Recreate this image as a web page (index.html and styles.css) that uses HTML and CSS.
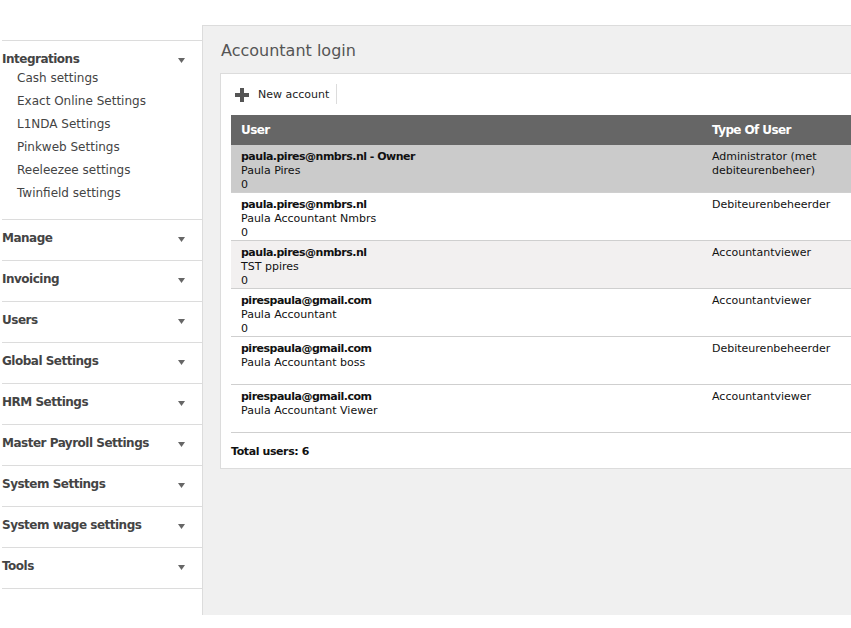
FILE: index.html
```html
<!DOCTYPE html>
<html>
<head>
<meta charset="utf-8">
<link rel="stylesheet" href="styles.css">
</head>
<body>
<div class="topbar"></div>
<div class="layout">
  <nav class="sidebar">
    <ul class="nav">
      <li class="section">
        <div class="section-head"><span>Integrations</span><svg class="caret" width="7" height="5" viewBox="0 0 7 5"><polygon points="0,0 7,0 3.5,5" fill="#666"/></svg></div>
        <ul class="sub">
          <li>Cash settings</li>
          <li>Exact Online Settings</li>
          <li>L1NDA Settings</li>
          <li>Pinkweb Settings</li>
          <li>Reeleezee settings</li>
          <li>Twinfield settings</li>
        </ul>
      </li>
      <li class="section"><div class="section-head"><span>Manage</span><svg class="caret" width="7" height="5" viewBox="0 0 7 5"><polygon points="0,0 7,0 3.5,5" fill="#666"/></svg></div></li>
      <li class="section"><div class="section-head"><span>Invoicing</span><svg class="caret" width="7" height="5" viewBox="0 0 7 5"><polygon points="0,0 7,0 3.5,5" fill="#666"/></svg></div></li>
      <li class="section"><div class="section-head"><span>Users</span><svg class="caret" width="7" height="5" viewBox="0 0 7 5"><polygon points="0,0 7,0 3.5,5" fill="#666"/></svg></div></li>
      <li class="section"><div class="section-head"><span>Global Settings</span><svg class="caret" width="7" height="5" viewBox="0 0 7 5"><polygon points="0,0 7,0 3.5,5" fill="#666"/></svg></div></li>
      <li class="section"><div class="section-head"><span>HRM Settings</span><svg class="caret" width="7" height="5" viewBox="0 0 7 5"><polygon points="0,0 7,0 3.5,5" fill="#666"/></svg></div></li>
      <li class="section"><div class="section-head"><span>Master Payroll Settings</span><svg class="caret" width="7" height="5" viewBox="0 0 7 5"><polygon points="0,0 7,0 3.5,5" fill="#666"/></svg></div></li>
      <li class="section"><div class="section-head"><span>System Settings</span><svg class="caret" width="7" height="5" viewBox="0 0 7 5"><polygon points="0,0 7,0 3.5,5" fill="#666"/></svg></div></li>
      <li class="section"><div class="section-head"><span>System wage settings</span><svg class="caret" width="7" height="5" viewBox="0 0 7 5"><polygon points="0,0 7,0 3.5,5" fill="#666"/></svg></div></li>
      <li class="section"><div class="section-head"><span>Tools</span><svg class="caret" width="7" height="5" viewBox="0 0 7 5"><polygon points="0,0 7,0 3.5,5" fill="#666"/></svg></div></li>
    </ul>
  </nav>
  <main class="main">
    <h1 class="title">Accountant login</h1>
    <div class="card">
      <div class="toolbar">
        <div class="tool-btn">
          <svg class="plus" width="14" height="14" viewBox="0 0 14 14"><rect x="0" y="5" width="14" height="4" fill="#555"/><rect x="5" y="0" width="4" height="14" fill="#555"/></svg>
          <span>New account</span>
        </div>
      </div>
      <div class="grid">
        <div class="row head">
          <div class="cell">User</div>
          <div class="cell">Type Of User</div>
          <div class="cell"></div>
        </div>
        <div class="row owner">
          <div class="cell"><b>paula.pires@nmbrs.nl - Owner</b><br>Paula Pires<br>0</div>
          <div class="cell">Administrator (met debiteurenbeheer)</div>
          <div class="cell"></div>
        </div>
        <div class="row">
          <div class="cell"><b>paula.pires@nmbrs.nl</b><br>Paula Accountant Nmbrs<br>0</div>
          <div class="cell">Debiteurenbeheerder</div>
          <div class="cell"></div>
        </div>
        <div class="row alt">
          <div class="cell"><b>paula.pires@nmbrs.nl</b><br>TST ppires<br>0</div>
          <div class="cell">Accountantviewer</div>
          <div class="cell"></div>
        </div>
        <div class="row">
          <div class="cell"><b>pirespaula@gmail.com</b><br>Paula Accountant<br>0</div>
          <div class="cell">Accountantviewer</div>
          <div class="cell"></div>
        </div>
        <div class="row">
          <div class="cell"><b>pirespaula@gmail.com</b><br>Paula Accountant boss</div>
          <div class="cell">Debiteurenbeheerder</div>
          <div class="cell"></div>
        </div>
        <div class="row">
          <div class="cell"><b>pirespaula@gmail.com</b><br>Paula Accountant Viewer</div>
          <div class="cell">Accountantviewer</div>
          <div class="cell"></div>
        </div>
      </div>
      <div class="total">Total users: 6</div>
    </div>
  </main>
</div>
</body>
</html>
```
FILE: styles.css
```css
html, body {
  margin: 0;
  padding: 0;
  overflow: hidden;
  background: #fff;
  font-family: "DejaVu Sans", Verdana, sans-serif;
  color: #111;
}

.topbar {
  height: 25px;
}

.layout {
  display: flex;
  height: 590px;
}

.sidebar {
  width: 200px;
  padding-left: 2px;
  padding-top: 15px;
  flex: none;
  background: #fff;
}

.nav, .sub {
  list-style: none;
  margin: 0;
  padding: 0;
}

.nav {
  border-top: 1px solid #dcdcdc;
}

.section {
  border-bottom: 1px solid #dcdcdc;
  padding: 10px 0 14px;
}

.section-head {
  display: flex;
  justify-content: space-between;
  align-items: center;
  padding-right: 17px;
  font-size: 12px;
  line-height: 16px;
  font-weight: bold;
  letter-spacing: -0.5px;
  color: #444;
}

.caret {
  margin-top: 3px;
  display: block;
}

.sub {
  padding-left: 15px;
}

.sub li {
  font-size: 12px;
  line-height: 23px;
  color: #444;
}

.main {
  flex: 1;
  min-width: 0;
  overflow: hidden;
  background: #f0f0f0;
  border-left: 1px solid #dcdcdc;
  border-top: 1px solid #dcdcdc;
  padding: 15px 0 0 17px;
}

.title {
  margin: 0 0 0 1px;
  font-size: 16px;
  line-height: 20px;
  font-weight: normal;
  color: #555;
}

.card {
  margin-top: 12px;
  width: 800px;
  background: #fff;
  border: 1px solid #dcdcdc;
  padding: 10px 10px 9px 10px;
}

.toolbar {
  display: flex;
  height: 21px;
  margin-bottom: 10px;
}

.tool-btn {
  display: flex;
  align-items: center;
  padding: 1px 7px 0 4px;
  border-right: 1px solid #dcdcdc;
  height: 19px;
  font-size: 11px;
  color: #222;
}

.plus {
  display: block;
  margin-right: 9px;
}

.grid {
  display: flex;
  flex-direction: column;
}

.row {
  display: grid;
  grid-template-columns: 471px 150px 1fr;
  height: 48px;
  box-sizing: border-box;
  border-bottom: 1px solid #cfcfcf;
  font-size: 11px;
  line-height: 14px;
  color: #111;
}

.row b {
  letter-spacing: -0.5px;
}

.row .cell {
  padding: 5px 10px 0;
}

.row.head {
  height: 30px;
  border-bottom: none;
  background: #666;
  color: #fff;
  font-size: 12px;
  font-weight: bold;
  letter-spacing: -0.6px;
}

.row.head .cell {
  padding: 0 10px;
  line-height: 30px;
}

.row.owner {
  background: #cbcbcb;
}

.row.alt {
  background: #f2f0f0;
}

.total {
  margin-top: 12px;
  font-size: 11px;
  line-height: 14px;
  font-weight: bold;
  letter-spacing: -0.4px;
  color: #111;
}
```
